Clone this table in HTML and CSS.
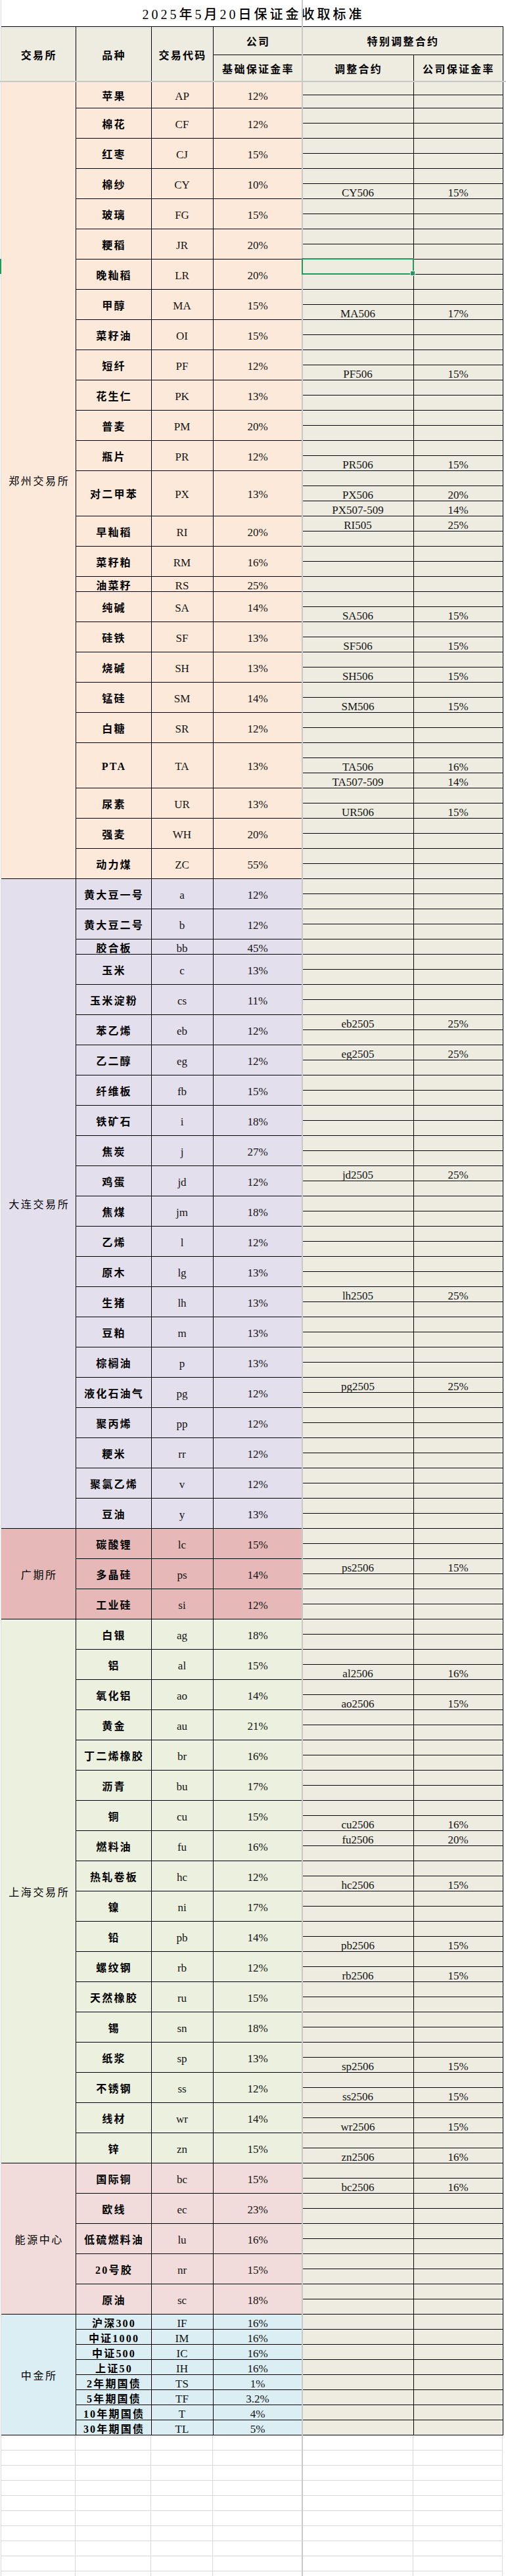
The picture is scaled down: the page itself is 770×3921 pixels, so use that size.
FILE: index.html
```html
<!DOCTYPE html>
<html lang="zh-CN">
<head>
<meta charset="utf-8">
<title>2025年5月20日保证金收取标准</title>
<link rel="stylesheet" href="styles.css">
</head>
<body>
<div class="sheet">
  <div class="title">2025年5月20日保证金收取标准</div>
  <table class="t">
    <colgroup><col class="c1"><col class="c2"><col class="c3"><col class="c4"><col class="c5"><col class="c6"></colgroup>
    <thead>
      <tr class="h1"><th rowspan="2">交易所</th><th rowspan="2">品种</th><th rowspan="2">交易代码</th><th>公司</th><th colspan="2">特别调整合约</th></tr>
      <tr class="h2"><th>基础保证金率</th><th>调整合约</th><th>公司保证金率</th></tr>
    </thead>
    <tbody class="zz">
      <tr class="r20"><th rowspan="53" class="ex">郑州交易所</th><td rowspan="2" class="n">苹果</td><td rowspan="2">AP</td><td rowspan="2">12%</td><td></td><td></td></tr>
      <tr class="r20"><td></td><td></td></tr>
      <tr><td rowspan="2" class="n">棉花</td><td rowspan="2">CF</td><td rowspan="2">12%</td><td></td><td></td></tr>
      <tr><td></td><td></td></tr>
      <tr><td rowspan="2" class="n">红枣</td><td rowspan="2">CJ</td><td rowspan="2">15%</td><td></td><td></td></tr>
      <tr><td></td><td></td></tr>
      <tr><td rowspan="2" class="n">棉纱</td><td rowspan="2">CY</td><td rowspan="2">10%</td><td></td><td></td></tr>
      <tr><td>CY506</td><td>15%</td></tr>
      <tr><td rowspan="2" class="n">玻璃</td><td rowspan="2">FG</td><td rowspan="2">15%</td><td></td><td></td></tr>
      <tr><td></td><td></td></tr>
      <tr><td rowspan="2" class="n">粳稻</td><td rowspan="2">JR</td><td rowspan="2">20%</td><td></td><td></td></tr>
      <tr><td></td><td></td></tr>
      <tr><td rowspan="2" class="n">晚籼稻</td><td rowspan="2">LR</td><td rowspan="2">20%</td><td></td><td></td></tr>
      <tr><td></td><td></td></tr>
      <tr><td rowspan="2" class="n">甲醇</td><td rowspan="2">MA</td><td rowspan="2">15%</td><td></td><td></td></tr>
      <tr><td>MA506</td><td>17%</td></tr>
      <tr><td rowspan="2" class="n">菜籽油</td><td rowspan="2">OI</td><td rowspan="2">15%</td><td></td><td></td></tr>
      <tr><td></td><td></td></tr>
      <tr><td rowspan="2" class="n">短纤</td><td rowspan="2">PF</td><td rowspan="2">12%</td><td></td><td></td></tr>
      <tr><td>PF506</td><td>15%</td></tr>
      <tr><td rowspan="2" class="n">花生仁</td><td rowspan="2">PK</td><td rowspan="2">13%</td><td></td><td></td></tr>
      <tr><td></td><td></td></tr>
      <tr><td rowspan="2" class="n">普麦</td><td rowspan="2">PM</td><td rowspan="2">20%</td><td></td><td></td></tr>
      <tr><td></td><td></td></tr>
      <tr><td rowspan="2" class="n">瓶片</td><td rowspan="2">PR</td><td rowspan="2">12%</td><td></td><td></td></tr>
      <tr><td>PR506</td><td>15%</td></tr>
      <tr><td rowspan="3" class="n">对二甲苯</td><td rowspan="3">PX</td><td rowspan="3">13%</td><td></td><td></td></tr>
      <tr><td>PX506</td><td>20%</td></tr>
      <tr><td>PX507-509</td><td>14%</td></tr>
      <tr><td rowspan="2" class="n">早籼稻</td><td rowspan="2">RI</td><td rowspan="2">20%</td><td>RI505</td><td>25%</td></tr>
      <tr><td></td><td></td></tr>
      <tr><td rowspan="2" class="n">菜籽粕</td><td rowspan="2">RM</td><td rowspan="2">16%</td><td></td><td></td></tr>
      <tr><td></td><td></td></tr>
      <tr><td class="n">油菜籽</td><td>RS</td><td>25%</td><td></td><td></td></tr>
      <tr><td rowspan="2" class="n">纯碱</td><td rowspan="2">SA</td><td rowspan="2">14%</td><td></td><td></td></tr>
      <tr><td>SA506</td><td>15%</td></tr>
      <tr><td rowspan="2" class="n">硅铁</td><td rowspan="2">SF</td><td rowspan="2">13%</td><td></td><td></td></tr>
      <tr><td>SF506</td><td>15%</td></tr>
      <tr><td rowspan="2" class="n">烧碱</td><td rowspan="2">SH</td><td rowspan="2">13%</td><td></td><td></td></tr>
      <tr><td>SH506</td><td>15%</td></tr>
      <tr><td rowspan="2" class="n">锰硅</td><td rowspan="2">SM</td><td rowspan="2">14%</td><td></td><td></td></tr>
      <tr><td>SM506</td><td>15%</td></tr>
      <tr><td rowspan="2" class="n">白糖</td><td rowspan="2">SR</td><td rowspan="2">12%</td><td></td><td></td></tr>
      <tr><td></td><td></td></tr>
      <tr><td rowspan="3" class="n">PTA</td><td rowspan="3">TA</td><td rowspan="3">13%</td><td></td><td></td></tr>
      <tr><td>TA506</td><td>16%</td></tr>
      <tr><td>TA507-509</td><td>14%</td></tr>
      <tr><td rowspan="2" class="n">尿素</td><td rowspan="2">UR</td><td rowspan="2">13%</td><td></td><td></td></tr>
      <tr><td>UR506</td><td>15%</td></tr>
      <tr><td rowspan="2" class="n">强麦</td><td rowspan="2">WH</td><td rowspan="2">20%</td><td></td><td></td></tr>
      <tr><td></td><td></td></tr>
      <tr><td rowspan="2" class="n">动力煤</td><td rowspan="2">ZC</td><td rowspan="2">55%</td><td></td><td></td></tr>
      <tr><td></td><td></td></tr>
    </tbody>
    <tbody class="dl">
      <tr><th rowspan="43" class="ex">大连交易所</th><td rowspan="2" class="n">黄大豆一号</td><td rowspan="2">a</td><td rowspan="2">12%</td><td></td><td></td></tr>
      <tr><td></td><td></td></tr>
      <tr><td rowspan="2" class="n">黄大豆二号</td><td rowspan="2">b</td><td rowspan="2">12%</td><td></td><td></td></tr>
      <tr><td></td><td></td></tr>
      <tr><td class="n">胶合板</td><td>bb</td><td>45%</td><td></td><td></td></tr>
      <tr><td rowspan="2" class="n">玉米</td><td rowspan="2">c</td><td rowspan="2">13%</td><td></td><td></td></tr>
      <tr><td></td><td></td></tr>
      <tr><td rowspan="2" class="n">玉米淀粉</td><td rowspan="2">cs</td><td rowspan="2">11%</td><td></td><td></td></tr>
      <tr><td></td><td></td></tr>
      <tr><td rowspan="2" class="n">苯乙烯</td><td rowspan="2">eb</td><td rowspan="2">12%</td><td>eb2505</td><td>25%</td></tr>
      <tr><td></td><td></td></tr>
      <tr><td rowspan="2" class="n">乙二醇</td><td rowspan="2">eg</td><td rowspan="2">12%</td><td>eg2505</td><td>25%</td></tr>
      <tr><td></td><td></td></tr>
      <tr><td rowspan="2" class="n">纤维板</td><td rowspan="2">fb</td><td rowspan="2">15%</td><td></td><td></td></tr>
      <tr><td></td><td></td></tr>
      <tr><td rowspan="2" class="n">铁矿石</td><td rowspan="2">i</td><td rowspan="2">18%</td><td></td><td></td></tr>
      <tr><td></td><td></td></tr>
      <tr><td rowspan="2" class="n">焦炭</td><td rowspan="2">j</td><td rowspan="2">27%</td><td></td><td></td></tr>
      <tr><td></td><td></td></tr>
      <tr><td rowspan="2" class="n">鸡蛋</td><td rowspan="2">jd</td><td rowspan="2">12%</td><td>jd2505</td><td>25%</td></tr>
      <tr><td></td><td></td></tr>
      <tr><td rowspan="2" class="n">焦煤</td><td rowspan="2">jm</td><td rowspan="2">18%</td><td></td><td></td></tr>
      <tr><td></td><td></td></tr>
      <tr><td rowspan="2" class="n">乙烯</td><td rowspan="2">l</td><td rowspan="2">12%</td><td></td><td></td></tr>
      <tr><td></td><td></td></tr>
      <tr><td rowspan="2" class="n">原木</td><td rowspan="2">lg</td><td rowspan="2">13%</td><td></td><td></td></tr>
      <tr><td></td><td></td></tr>
      <tr><td rowspan="2" class="n">生猪</td><td rowspan="2">lh</td><td rowspan="2">13%</td><td>lh2505</td><td>25%</td></tr>
      <tr><td></td><td></td></tr>
      <tr><td rowspan="2" class="n">豆粕</td><td rowspan="2">m</td><td rowspan="2">13%</td><td></td><td></td></tr>
      <tr><td></td><td></td></tr>
      <tr><td rowspan="2" class="n">棕榈油</td><td rowspan="2">p</td><td rowspan="2">13%</td><td></td><td></td></tr>
      <tr><td></td><td></td></tr>
      <tr><td rowspan="2" class="n">液化石油气</td><td rowspan="2">pg</td><td rowspan="2">12%</td><td>pg2505</td><td>25%</td></tr>
      <tr><td></td><td></td></tr>
      <tr><td rowspan="2" class="n">聚丙烯</td><td rowspan="2">pp</td><td rowspan="2">12%</td><td></td><td></td></tr>
      <tr><td></td><td></td></tr>
      <tr><td rowspan="2" class="n">粳米</td><td rowspan="2">rr</td><td rowspan="2">12%</td><td></td><td></td></tr>
      <tr><td></td><td></td></tr>
      <tr><td rowspan="2" class="n">聚氯乙烯</td><td rowspan="2">v</td><td rowspan="2">12%</td><td></td><td></td></tr>
      <tr><td></td><td></td></tr>
      <tr><td rowspan="2" class="n">豆油</td><td rowspan="2">y</td><td rowspan="2">13%</td><td></td><td></td></tr>
      <tr><td></td><td></td></tr>
    </tbody>
    <tbody class="gq">
      <tr><th rowspan="6" class="ex">广期所</th><td rowspan="2" class="n">碳酸锂</td><td rowspan="2">lc</td><td rowspan="2">15%</td><td></td><td></td></tr>
      <tr><td></td><td></td></tr>
      <tr><td rowspan="2" class="n">多晶硅</td><td rowspan="2">ps</td><td rowspan="2">14%</td><td>ps2506</td><td>15%</td></tr>
      <tr><td></td><td></td></tr>
      <tr><td rowspan="2" class="n">工业硅</td><td rowspan="2">si</td><td rowspan="2">12%</td><td></td><td></td></tr>
      <tr><td></td><td></td></tr>
    </tbody>
    <tbody class="sh">
      <tr><th rowspan="36" class="ex">上海交易所</th><td rowspan="2" class="n">白银</td><td rowspan="2">ag</td><td rowspan="2">18%</td><td></td><td></td></tr>
      <tr><td></td><td></td></tr>
      <tr><td rowspan="2" class="n">铝</td><td rowspan="2">al</td><td rowspan="2">15%</td><td></td><td></td></tr>
      <tr><td>al2506</td><td>16%</td></tr>
      <tr><td rowspan="2" class="n">氧化铝</td><td rowspan="2">ao</td><td rowspan="2">14%</td><td></td><td></td></tr>
      <tr><td>ao2506</td><td>15%</td></tr>
      <tr><td rowspan="2" class="n">黄金</td><td rowspan="2">au</td><td rowspan="2">21%</td><td></td><td></td></tr>
      <tr><td></td><td></td></tr>
      <tr><td rowspan="2" class="n">丁二烯橡胶</td><td rowspan="2">br</td><td rowspan="2">16%</td><td></td><td></td></tr>
      <tr><td></td><td></td></tr>
      <tr><td rowspan="2" class="n">沥青</td><td rowspan="2">bu</td><td rowspan="2">17%</td><td></td><td></td></tr>
      <tr><td></td><td></td></tr>
      <tr><td rowspan="2" class="n">铜</td><td rowspan="2">cu</td><td rowspan="2">15%</td><td></td><td></td></tr>
      <tr><td>cu2506</td><td>16%</td></tr>
      <tr><td rowspan="2" class="n">燃料油</td><td rowspan="2">fu</td><td rowspan="2">16%</td><td>fu2506</td><td>20%</td></tr>
      <tr><td></td><td></td></tr>
      <tr><td rowspan="2" class="n">热轧卷板</td><td rowspan="2">hc</td><td rowspan="2">12%</td><td></td><td></td></tr>
      <tr><td>hc2506</td><td>15%</td></tr>
      <tr><td rowspan="2" class="n">镍</td><td rowspan="2">ni</td><td rowspan="2">17%</td><td></td><td></td></tr>
      <tr><td></td><td></td></tr>
      <tr><td rowspan="2" class="n">铅</td><td rowspan="2">pb</td><td rowspan="2">14%</td><td></td><td></td></tr>
      <tr><td>pb2506</td><td>15%</td></tr>
      <tr><td rowspan="2" class="n">螺纹钢</td><td rowspan="2">rb</td><td rowspan="2">12%</td><td></td><td></td></tr>
      <tr><td>rb2506</td><td>15%</td></tr>
      <tr><td rowspan="2" class="n">天然橡胶</td><td rowspan="2">ru</td><td rowspan="2">15%</td><td></td><td></td></tr>
      <tr><td></td><td></td></tr>
      <tr><td rowspan="2" class="n">锡</td><td rowspan="2">sn</td><td rowspan="2">18%</td><td></td><td></td></tr>
      <tr><td></td><td></td></tr>
      <tr><td rowspan="2" class="n">纸浆</td><td rowspan="2">sp</td><td rowspan="2">13%</td><td></td><td></td></tr>
      <tr><td>sp2506</td><td>15%</td></tr>
      <tr><td rowspan="2" class="n">不锈钢</td><td rowspan="2">ss</td><td rowspan="2">12%</td><td></td><td></td></tr>
      <tr><td>ss2506</td><td>15%</td></tr>
      <tr><td rowspan="2" class="n">线材</td><td rowspan="2">wr</td><td rowspan="2">14%</td><td></td><td></td></tr>
      <tr><td>wr2506</td><td>15%</td></tr>
      <tr><td rowspan="2" class="n">锌</td><td rowspan="2">zn</td><td rowspan="2">15%</td><td></td><td></td></tr>
      <tr><td>zn2506</td><td>16%</td></tr>
    </tbody>
    <tbody class="ny">
      <tr><th rowspan="10" class="ex">能源中心</th><td rowspan="2" class="n">国际铜</td><td rowspan="2">bc</td><td rowspan="2">15%</td><td></td><td></td></tr>
      <tr><td>bc2506</td><td>16%</td></tr>
      <tr><td rowspan="2" class="n">欧线</td><td rowspan="2">ec</td><td rowspan="2">23%</td><td></td><td></td></tr>
      <tr><td></td><td></td></tr>
      <tr><td rowspan="2" class="n">低硫燃料油</td><td rowspan="2">lu</td><td rowspan="2">16%</td><td></td><td></td></tr>
      <tr><td></td><td></td></tr>
      <tr><td rowspan="2" class="n">20号胶</td><td rowspan="2">nr</td><td rowspan="2">15%</td><td></td><td></td></tr>
      <tr><td></td><td></td></tr>
      <tr><td rowspan="2" class="n">原油</td><td rowspan="2">sc</td><td rowspan="2">18%</td><td></td><td></td></tr>
      <tr><td></td><td></td></tr>
    </tbody>
    <tbody class="zj">
      <tr><th rowspan="8" class="ex">中金所</th><td class="n">沪深300</td><td>IF</td><td>16%</td><td></td><td></td></tr>
      <tr><td class="n">中证1000</td><td>IM</td><td>16%</td><td></td><td></td></tr>
      <tr><td class="n">中证500</td><td>IC</td><td>16%</td><td></td><td></td></tr>
      <tr><td class="n">上证50</td><td>IH</td><td>16%</td><td></td><td></td></tr>
      <tr><td class="n">2年期国债</td><td>TS</td><td>1%</td><td></td><td></td></tr>
      <tr><td class="n">5年期国债</td><td>TF</td><td>3.2%</td><td></td><td></td></tr>
      <tr><td class="n">10年期国债</td><td>T</td><td>4%</td><td></td><td></td></tr>
      <tr><td class="n">30年期国债</td><td>TL</td><td>5%</td><td></td><td></td></tr>
    </tbody>
  </table>
  <div class="tail"><span></span><span></span><span></span><span></span><span></span><span></span></div>
  <div class="freeze-v"></div>
  <div class="freeze-h"></div>
  <div class="sel"></div>
  <div class="row-mark"></div>
</div>
</body>
</html>
```

FILE: styles.css
```css
* { box-sizing: border-box; }
html, body { margin: 0; padding: 0; background: #fff; }
body {
  width: 770px;
  height: 3921px;
  overflow: hidden;
  font-family: "Liberation Serif", "Noto Sans CJK SC", serif;
  color: #141414;
}
.sheet {
  position: relative;
  width: 770px;
  height: 3921px;
  padding-left: 2px;
  background: linear-gradient(to right, #fff 0 1px, #dadada 1px 2px, transparent 2px);
}
.title {
  width: 763px;
  height: 40px;
  display: flex;
  align-items: center;
  justify-content: center;
  padding: 1px 0 0 4px;
  font-size: 20px;
  letter-spacing: 4px;
  font-weight: 500;
  color: #000;
  background: #fff;
}
.t {
  border-collapse: collapse;
  table-layout: fixed;
  width: 763px;
}
.c1 { width: 113px; }
.c2 { width: 115px; }
.c3 { width: 94px; }
.c4 { width: 136px; }
.c5 { width: 169px; }
.c6 { width: 136px; }
.t td, .t th {
  border: 1px solid #000;
  padding: 6px 0 0;
  text-align: center;
  vertical-align: middle;
  font-size: 17px;
  line-height: 16px;
  font-weight: 400;
  white-space: nowrap;
  overflow: hidden;
}
.t td[rowspan], .t th[rowspan] {
  padding-top: 4px;
  line-height: 18px;
}
.t thead th {
  background: #eeece1;
  font-weight: 700;
  font-size: 16px;
  letter-spacing: 2.3px;
  padding: 4px 0 0 2px;
  line-height: 18px;
  color: #000;
}
.t thead .h1 { height: 43px; }
.t thead .h2 { height: 41px; }
.t thead th:first-child { border-left: 0; }
.t tbody tr { height: 23px; }
.t tbody tr.r20 { height: 20px; }
.t .ex {
  border-left: 0;
  font-size: 16px;
  letter-spacing: 2.6px;
  padding-left: 3px;
  color: #000;
}
.t .n {
  font-size: 16px;
  font-weight: 700;
  letter-spacing: 2.2px;
  padding-left: 2px;
  color: #000;
}
.zz { background: #fde9d9; }
.dl { background: #e4dfec; }
.gq { background: #e6b8b7; }
.sh { background: #ebf1de; }
.ny { background: #f2dcdb; }
.zj { background: #daeef3; }
.t tbody td:nth-last-child(-n+2) { background: #eeece1; }

.tail {
  display: grid;
  grid-template-columns: 113px 115px 94px 136px 169px 136px;
  width: 763px;
  height: 217px;
}
.tail span {
  border-right: 1px solid #d9d9d9;
  background: repeating-linear-gradient(to bottom, transparent 0 22px, #d9d9d9 22px 23px);
}

.freeze-v {
  position: absolute;
  left: 459px;
  top: 0;
  width: 2px;
  height: 3921px;
  background: #c8c8c8;
}
.freeze-h {
  position: absolute;
  left: 0;
  top: 123px;
  width: 770px;
  height: 2px;
  background: #c8c8c8;
}
.sel {
  position: absolute;
  left: 459px;
  top: 393px;
  width: 171px;
  height: 25px;
  border: 2px solid #1e9a5c;
}
.sel::after {
  content: "";
  position: absolute;
  right: -4px;
  bottom: -4px;
  width: 6px;
  height: 6px;
  background: #1e9a5c;
  border: 1px solid #fff;
}
.row-mark {
  position: absolute;
  left: 0;
  top: 394px;
  width: 2px;
  height: 23px;
  background: #1e9a5c;
}
```
